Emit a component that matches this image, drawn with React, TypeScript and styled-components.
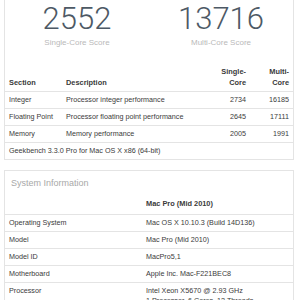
import React from 'react';
import styled, { createGlobalStyle } from 'styled-components';

const GlobalStyle = createGlobalStyle`
  body {
    margin: 0;
    background: #ffffff;
    font-family: "Liberation Sans", Arial, sans-serif;
    color: #3a3a3a;
  }
`;

const Page = styled.div`
  width: 290px;
  margin-left: 4px;
  display: flex;
  flex-direction: column;
  gap: 10px;
`;

const Card = styled.section<{ $openTop?: boolean }>`
  border: 1px solid #e4e4e4;
  border-top-width: ${(p) => (p.$openTop ? 0 : 1)}px;
  background: #ffffff;
`;

const Scores = styled.div`
  display: grid;
  grid-template-columns: 144px 1fr;
  padding-bottom: 17px;
`;

const Score = styled.div`
  display: flex;
  flex-direction: column;
  align-items: center;
`;

const ScoreValue = styled.div`
  font-family: Roboto, "Liberation Sans", sans-serif;
  font-weight: 300;
  font-size: 31px;
  line-height: 37px;
  margin-top: 0;
  color: #4d5965;
`;

const ScoreLabel = styled.div`
  font-size: 8px;
  line-height: 11px;
  color: #b9b9b9;
`;

const Table = styled.table`
  width: 100%;
  border-collapse: collapse;
  table-layout: fixed;
  font-size: 7.2px;
  line-height: 10px;
  color: #3a3a3a;
`;

const HeadCell = styled.th<{ $num?: boolean }>`
  padding: 1px 4px 3px;
  line-height: 11px;
  font-size: 7.4px;
  font-weight: bold;
  text-align: ${(p) => (p.$num ? 'right' : 'left')};
  vertical-align: bottom;
  border-bottom: 1px solid #e4e4e4;
`;

const Row = styled.tr<{ $last?: boolean }>`
  border-bottom: ${(p) => (p.$last ? 'none' : '1px solid #e4e4e4')};
`;

const Cell = styled.td<{ $num?: boolean }>`
  padding: 3px 4px;
  text-align: ${(p) => (p.$num ? 'right' : 'left')};
  vertical-align: top;
  white-space: nowrap;
`;

const InfoTitle = styled.h2`
  margin: 0;
  padding: 6px 6px 7px;
  font-size: 9px;
  line-height: 12px;
  font-weight: normal;
  color: #a8a8a8;
`;

const InfoHead = styled.th`
  padding: 3px 4px 5px;
  font-size: 7.4px;
  line-height: 10px;
  font-weight: bold;
  text-align: left;
  border-bottom: 1px solid #e4e4e4;
`;

const benchmarks = [
  { section: 'Integer', description: 'Processor integer performance', single: 2734, multi: 16185 },
  { section: 'Floating Point', description: 'Processor floating point performance', single: 2645, multi: 17111 },
  { section: 'Memory', description: 'Memory performance', single: 2005, multi: 1991 },
];

const systemInfo: [string, React.ReactNode][] = [
  ['Operating System', 'Mac OS X 10.10.3 (Build 14D136)'],
  ['Model', 'Mac Pro (Mid 2010)'],
  ['Model ID', 'MacPro5,1'],
  ['Motherboard', 'Apple Inc. Mac-F221BEC8'],
  [
    'Processor',
    <>
      Intel Xeon X5670 @ 2.93 GHz
      <br />1 Processor, 6 Cores, 12 Threads
    </>,
  ],
];

export default function App() {
  return (
    <>
      <GlobalStyle />
      <Page>
        <Card $openTop>
          <Scores>
            <Score>
              <ScoreValue>2552</ScoreValue>
              <ScoreLabel>Single-Core Score</ScoreLabel>
            </Score>
            <Score>
              <ScoreValue>13716</ScoreValue>
              <ScoreLabel>Multi-Core Score</ScoreLabel>
            </Score>
          </Scores>
          <Table>
            <colgroup>
              <col style={{ width: 57 }} />
              <col style={{ width: 142 }} />
              <col style={{ width: 46 }} />
              <col style={{ width: 43 }} />
            </colgroup>
            <thead>
              <tr>
                <HeadCell>Section</HeadCell>
                <HeadCell>Description</HeadCell>
                <HeadCell $num>
                  Single-
                  <br />
                  Core
                </HeadCell>
                <HeadCell $num>
                  Multi-
                  <br />
                  Core
                </HeadCell>
              </tr>
            </thead>
            <tbody>
              {benchmarks.map((b) => (
                <Row key={b.section}>
                  <Cell>{b.section}</Cell>
                  <Cell>{b.description}</Cell>
                  <Cell $num>{b.single}</Cell>
                  <Cell $num>{b.multi}</Cell>
                </Row>
              ))}
              <Row $last>
                <Cell colSpan={4}>Geekbench 3.3.0 Pro for Mac OS X x86 (64-bit)</Cell>
              </Row>
            </tbody>
          </Table>
        </Card>
        <Card>
          <InfoTitle>System Information</InfoTitle>
          <Table>
            <colgroup>
              <col style={{ width: 137 }} />
              <col />
            </colgroup>
            <thead>
              <tr>
                <InfoHead />
                <InfoHead>Mac Pro (Mid 2010)</InfoHead>
              </tr>
            </thead>
            <tbody>
              {systemInfo.map(([label, value]) => (
                <Row key={label}>
                  <Cell>{label}</Cell>
                  <Cell>{value}</Cell>
                </Row>
              ))}
            </tbody>
          </Table>
        </Card>
      </Page>
    </>
  );
}
